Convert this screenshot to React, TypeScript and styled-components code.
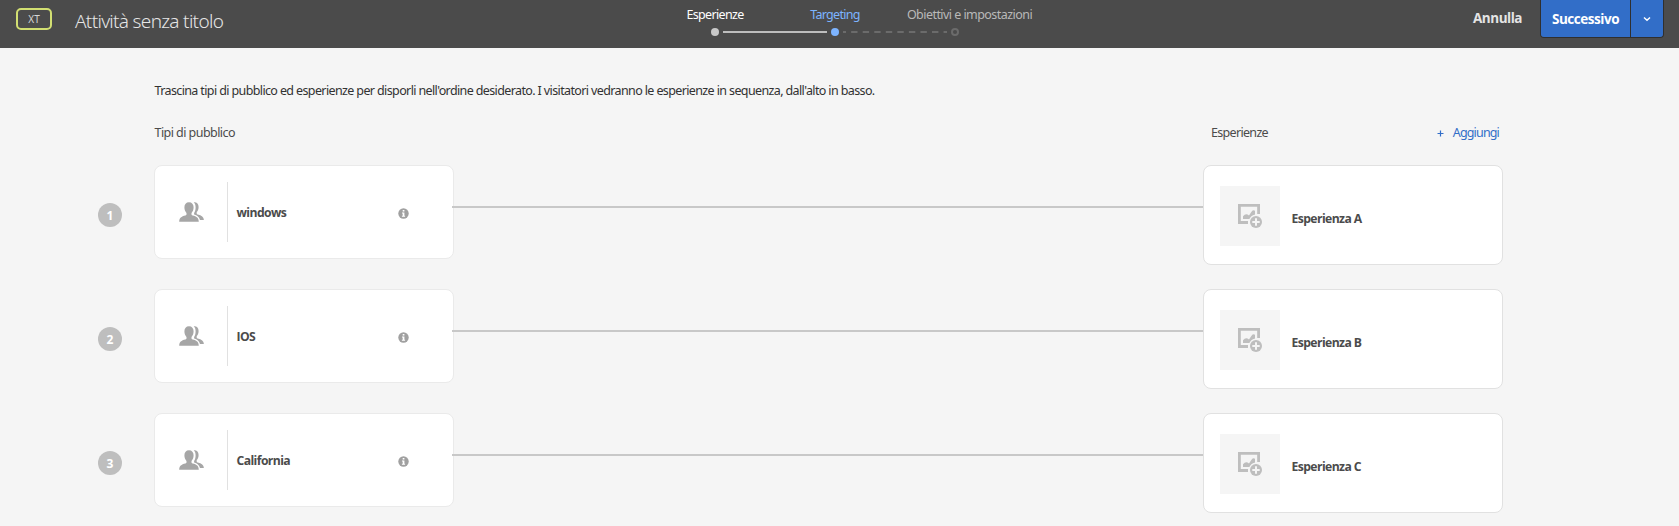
import React from "react";
import styled, { createGlobalStyle } from "styled-components";

const GlobalStyle = createGlobalStyle`
  *, *::before, *::after { box-sizing: border-box; }
  html, body, #root { height: 100%; }
  body {
    margin: 0;
    overflow: hidden;
    background: #f5f5f5;
    color: #4b4b4b;
    font-family: "Noto Sans", "Open Sans", sans-serif;
    font-size: 12.5px;
    letter-spacing: -0.55px;
    line-height: 20px;
  }
  svg { display: block; }
`;

const Header = styled.header`
  display: grid;
  grid-template-columns: 655px 390px 1fr;
  height: 48px;
  background: #4b4b4b;
`;

const TitleGroup = styled.div`
  display: flex;
  align-items: flex-start;
  padding-left: 16px;
`;

const TypeBadge = styled.span`
  width: 36px;
  height: 22px;
  margin-top: 8px;
  border: 2px solid #d2df72;
  border-radius: 5px;
  color: #d6d6d6;
  font-size: 10px;
  line-height: 19px;
  letter-spacing: 0;
  text-align: center;
`;

const Title = styled.h1`
  margin: 7px 0 0 23px;
  color: #e6e6e6;
  font-size: 19px;
  font-weight: 300;
  line-height: 28px;
  letter-spacing: -0.69px;
`;

const Steps = styled.nav`
  padding-top: 5px;
`;

const StepLabels = styled.div`
  display: grid;
  grid-template-columns: 120px 120px 149px;
  text-align: center;
`;

const StepLabel = styled.span<{ $color: string; $spacing: number }>`
  color: ${(p) => p.$color};
  letter-spacing: ${(p) => p.$spacing}px;
`;

const Actions = styled.div`
  display: flex;
  justify-content: flex-end;
  align-items: flex-start;
  padding-right: 15px;
`;

const CancelButton = styled.button`
  margin: 8px 18px 0 0;
  padding: 0;
  border: 0;
  background: none;
  color: #e4e4e4;
  font: 700 13.5px/20px "Open Sans", sans-serif;
  letter-spacing: -0.48px;
`;

const SplitButton = styled.div`
  display: grid;
  grid-template-columns: 90px 32px;
  width: 124px;
  height: 38px;
  border: 1px solid #2f2f2f;
  border-top: 0;
  border-radius: 0 0 4px 4px;
  overflow: hidden;
`;

const SplitPart = styled.button<{ $divided?: boolean }>`
  display: flex;
  align-items: center;
  justify-content: center;
  padding: 1px 0 0;
  border: 0;
  border-right: ${(p) => (p.$divided ? "1px solid #2f2f2f" : "0")};
  background: #326ec8;
  color: #fff;
  font: 700 13.5px/20px "Open Sans", sans-serif;
  letter-spacing: -0.47px;
`;

const Main = styled.main`
  width: 1405px;
  margin-left: 98px;
  padding-top: 33px;
`;

const Intro = styled.p`
  margin: 0 0 22px 56.5px;
  color: #323232;
  letter-spacing: -0.62px;
  white-space: nowrap;
`;

const ColumnHeads = styled.div`
  display: flex;
  justify-content: space-between;
  margin: 0 4px 22px 56.5px;
`;

const ExperienceHead = styled.div`
  display: flex;
  justify-content: space-between;
  width: 288px;
`;

const AddButton = styled.button`
  display: flex;
  align-items: center;
  gap: 9px;
  padding: 0;
  border: 0;
  background: none;
  color: #326ec8;
  font: inherit;
  letter-spacing: -0.84px;
`;

const Rows = styled.div`
  display: flex;
  flex-direction: column;
  gap: 24px;
`;

const Row = styled.div`
  display: grid;
  grid-template-columns: 24px 32px 300px 749px 300px;
  grid-template-rows: 100px;
`;

const Order = styled.span`
  grid-column: 1;
  width: 24px;
  height: 24px;
  margin-top: 38px;
  border-radius: 50%;
  background: #bebebe;
  color: #fff;
  font-size: 12px;
  font-weight: 700;
  line-height: 25px;
  letter-spacing: 0;
  text-align: center;
`;

const AudienceCard = styled.section`
  grid-column: 3;
  display: flex;
  align-items: center;
  height: 94px;
  padding: 0 44px 0 24px;
  border: 1px solid #eaeaea;
  border-radius: 8px;
  background: #fff;
`;

const AudienceIcon = styled.span`
  width: 49px;
  height: 60px;
  padding-top: 20px;
  border-right: 1px solid #e1e1e1;
`;

const Name = styled.strong`
  font: 700 12.2px/20px "Open Sans", sans-serif;
  letter-spacing: -0.58px;
  color: #4b4b4b;
`;

const AudienceName = styled(Name)`
  flex: 1;
  padding: 2px 0 0 8.5px;
`;

const InfoIcon = styled.svg`
  margin-top: 3px;
`;

const Connector = styled.div`
  grid-column: 4;
  height: 2px;
  margin: 41px 0 0 -2px;
  background: #c8c8c8;
`;

const ExperienceCard = styled.section`
  grid-column: 5;
  display: flex;
  padding: 20px 16px 18px;
  border: 1px solid #e1e1e1;
  border-radius: 8px;
  background: #fff;
`;

const Thumb = styled.span`
  display: flex;
  align-items: center;
  justify-content: center;
  width: 60px;
  height: 60px;
  background: #f5f5f5;
`;

const ExperienceName = styled(Name)`
  margin: 23px 0 0 11.5px;
`;

const StepTrack = () => (
  <svg width="390" height="14" viewBox="0 0 390 14">
    <circle cx="60" cy="7" r="4" fill="#c8c8c8" />
    <path d="M68 7h104" stroke="#bebebe" strokeWidth="2" />
    <circle cx="180" cy="7" r="4" fill="#7db4ff" />
    <path d="M188 7h104" stroke="#6b6b6b" strokeWidth="2" strokeDasharray="6.4 5.15" strokeDashoffset="3.4" />
    <circle cx="300" cy="7" r="3" fill="none" stroke="#6b6b6b" strokeWidth="2" />
  </svg>
);

const People = () => (
  <svg width="26" height="20" viewBox="0 0 26 20" fill="#a6a6a6">
    <path d="M10 0.3C12.9 0.3 14.6 2.3 14.6 5.3C14.6 7.8 13.8 9.6 12.5 10.9V12.3C12.5 13 12.9 13.3 13.6 13.5C17.8 14.4 19.7 16 19.8 19.8H0.2C0.3 16 2.3 14.4 6.4 13.5C7.1 13.3 7.5 13 7.5 12.3V10.9C6.2 9.6 5.4 7.8 5.4 5.3C5.4 2.3 7.1 0.3 10 0.3Z" />
    <path d="M14.7 0.3C17.8 0 19.6 2 19.6 4.9C19.6 7.3 18.8 8.9 17.7 10.1V11.4C17.7 12 18 12.3 18.7 12.5C22.7 13.5 24.7 14.9 24.9 18H21C20.2 14.7 18.3 13.4 15.1 12.4V10.9C16.1 9.5 16.6 7.7 16.6 5.3C16.6 3.1 16 1.4 14.7 0.3Z" />
  </svg>
);

const Info = () => (
  <InfoIcon width="11" height="11" viewBox="0 0 11 11">
    <circle cx="5.5" cy="5.5" r="5.2" fill="#a0a0a0" />
    <path d="M4.7 2h1.7v1.5H4.7zM4 4.5h2.4v3.2h.7v1H3.9v-1h.8V5.5H4z" fill="#fff" />
  </InfoIcon>
);

const AddImage = () => (
  <svg width="26" height="26" viewBox="0 0 26 26">
    <path d="M11 19.5H2.4V2.4H21.6V11" fill="none" stroke="#bebebe" strokeWidth="2.8" />
    <path d="M6 16V13.2Q9 9.4 12 12.6L14 9.6Q15.8 6 18 7.8V11.5Q14.4 12.4 12.5 16Z" fill="#bebebe" />
    <circle cx="19" cy="19" r="7.2" fill="#f5f5f5" />
    <circle cx="19" cy="19" r="6" fill="#bebebe" />
    <path d="M19 15.3v7.4M15.3 19h7.4" stroke="#f5f5f5" strokeWidth="2" />
  </svg>
);

const steps = [
  { label: "Esperienze", color: "#ffffff", spacing: -0.66 },
  { label: "Targeting", color: "#7db4ff", spacing: -0.72 },
  { label: "Obiettivi e impostazioni", color: "#b9b9b9", spacing: -0.55 },
];

const pairs = [
  { audience: "windows", experience: "Esperienza A" },
  { audience: "IOS", experience: "Esperienza B" },
  { audience: "California", experience: "Esperienza C" },
];

export default function App() {
  return (
    <>
      <GlobalStyle />
      <Header>
        <TitleGroup>
          <TypeBadge>XT</TypeBadge>
          <Title>Attività senza titolo</Title>
        </TitleGroup>
        <Steps>
          <StepLabels>
            {steps.map((s) => (
              <StepLabel key={s.label} $color={s.color} $spacing={s.spacing}>
                {s.label}
              </StepLabel>
            ))}
          </StepLabels>
          <StepTrack />
        </Steps>
        <Actions>
          <CancelButton>Annulla</CancelButton>
          <SplitButton>
            <SplitPart $divided>Successivo</SplitPart>
            <SplitPart aria-label="Altre opzioni">
              <svg width="8" height="6" viewBox="0 0 8 6">
                <path d="M1 1.5l3 2.7 3-2.7" fill="none" stroke="#fff" strokeWidth="1.5" />
              </svg>
            </SplitPart>
          </SplitButton>
        </Actions>
      </Header>
      <Main>
        <Intro>
          Trascina tipi di pubblico ed esperienze per disporli nell'ordine desiderato. I visitatori
          vedranno le esperienze in sequenza, dall'alto in basso.
        </Intro>
        <ColumnHeads>
          <span>Tipi di pubblico</span>
          <ExperienceHead>
            <StepLabel $color="#4b4b4b" $spacing={-0.68}>
              Esperienze
            </StepLabel>
            <AddButton>
              <svg width="7" height="7" viewBox="0 0 7 7">
                <path d="M3.5 .5v6M.5 3.5h6" stroke="#326ec8" strokeWidth="1.2" />
              </svg>
              Aggiungi
            </AddButton>
          </ExperienceHead>
        </ColumnHeads>
        <Rows>
          {pairs.map((p, i) => (
            <Row key={p.audience}>
              <Order>{i + 1}</Order>
              <AudienceCard>
                <AudienceIcon>
                  <People />
                </AudienceIcon>
                <AudienceName>{p.audience}</AudienceName>
                <Info />
              </AudienceCard>
              <Connector />
              <ExperienceCard>
                <Thumb>
                  <AddImage />
                </Thumb>
                <ExperienceName>{p.experience}</ExperienceName>
              </ExperienceCard>
            </Row>
          ))}
        </Rows>
      </Main>
    </>
  );
}
